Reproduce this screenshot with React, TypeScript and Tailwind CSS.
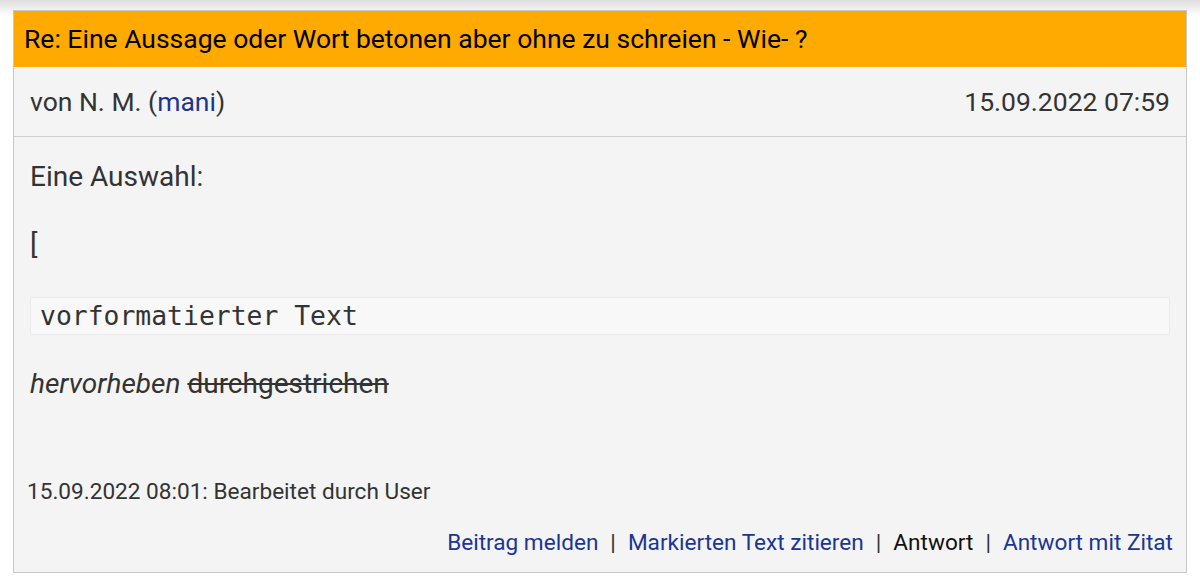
export default function App() {
  return (
    <div className="min-h-[580px] bg-white bg-gradient-to-b from-[#dedede] to-white to-[16px] px-[13px] pt-[10px] font-['Roboto',sans-serif]">
      <div className="border border-[#c8c8c8] bg-[#f4f4f4]">
        <div className="flex h-[56px] items-center bg-[#ffaa00] px-[10px] text-[26.5px] text-black">
          Re: Eine Aussage oder Wort betonen aber ohne zu schreien - Wie- ?
        </div>
        <div className="flex h-[70px] items-center justify-between border-b border-[#cfcfcf] px-[16px] text-[26.5px] text-[#333]">
          <span>
            von N. M. (<a className="text-[#1c3594]">mani</a>)
          </span>
          <span>15.09.2022 07:59</span>
        </div>
        <div className="px-[16px] text-[#333]">
          <p className="pt-[24px] text-[28px] leading-[32px]">Eine Auswahl:</p>
          <p className="pt-[36px] text-[28px] leading-[32px]">[</p>
          <pre className="mt-[36px] border border-[#ebebeb] bg-[#f8f8f8] px-[9px] py-[2px] font-['DejaVu_Sans_Mono',monospace] text-[26.4px] leading-[32px] text-[#333]">
            vorformatierter Text
          </pre>
          <p className="pt-[33px] text-[28px] leading-[32px]">
            <em>hervorheben</em> <s>durchgestrichen</s>
          </p>
          <p className="-ml-[3px] pt-[78px] text-[22.6px] leading-[28px]">
            15.09.2022 08:01: Bearbeitet durch User
          </p>
          <div className="-mr-[3px] flex justify-end gap-[12px] pb-[15px] pt-[23px] text-[22.6px] leading-[28px]">
            <a className="text-[#1c3594]">Beitrag melden</a>
            <span>|</span>
            <a className="text-[#1c3594]">Markierten Text zitieren</a>
            <span>|</span>
            <span className="text-[#111]">Antwort</span>
            <span>|</span>
            <a className="text-[#1c3594]">Antwort mit Zitat</a>
          </div>
        </div>
      </div>
    </div>
  );
}
